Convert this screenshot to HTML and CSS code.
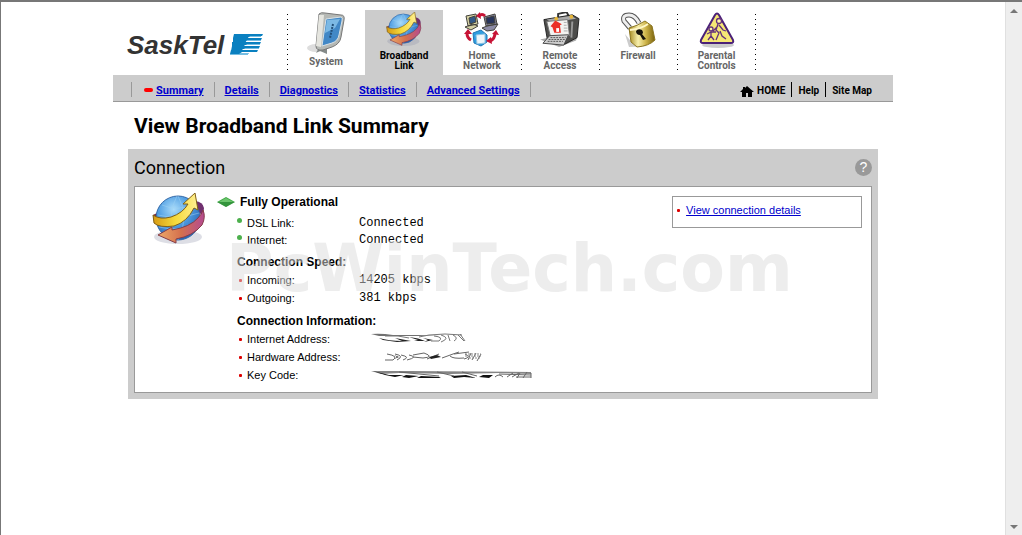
FILE: index.html
```
<!DOCTYPE html>
<html lang="en">

<head>
    <meta charset="UTF-8">
    <meta name="viewport" content="width=device-width, initial-scale=1.0">
    <title>View Broadband Link Summary</title>
    <link rel="stylesheet" href="styles.css">
</head>

<body>
    <div class="page">
        <header>
            <a class="logo" href="#" aria-label="SaskTel home">
                <span class="logo-name">SaskTel</span>
                <svg width="33" height="22" viewBox="0 0 33 22">
                    <path fill="#75bde2" d="M18 2H31V3H18zM3 6H31V7H3zM16 10H30V11H16zM2 14H29V15H2zM8 19H19V20H8zM0 20H18V21H0z" />
                    <path fill="#0a80c0" d="M4 0H33L32 2H20L18 4H3zM3 4H32L31 6H17L15 9H3zM2 8H31L30 10H17L14 13H2zM2 12H30L29 14H15L12 17H1zM1 16H28L27 18H12L9 20H0z" />
                    <path fill="#fff" d="M19 3H33V4H18zM17 7H33V8H16zM15 11H33V12H14zM13 15H33V16H12zM19 19H33V22H18z" />
                </svg>
            </a>
            <nav class="tabs">
                <a href="#">
                    <svg width="44" height="42" viewBox="0 0 44 42">
                        <ellipse cx="12" cy="36" rx="9" ry="4" fill="#ddd" />
                        <path fill="#858b8a" d="M17 32L23 36V42L16 39 12 41Z" />
                        <path fill="#b5b8b4" stroke="#777" d="M15 2Q17 0 21 1L37 3Q41 3 40 8L37 25Q36 32 28 35L19 38Q12 39 12 34Z" />
                        <path fill="#e5e5df" d="M15 3L20 3 17 35 12 34Z" />
                        <path fill="#4288c6" stroke="#d9e2e7" d="M22 7L37 5Q39 5 38 9L35 23Q34 29 28 31L18 34Z" />
                        <path fill="#7cb9e4" d="M23 8L36 7 31 16 21 21Z" />
                        <path fill="none" stroke="#234f79" stroke-width="2" stroke-dasharray="2 1" d="M29 12L26 26" />
                    </svg>
                    <span>System</span>
                </a>
                <a class="active" href="#">
                    <svg width="36" height="36" viewBox="0 0 54 54">
                        <use href="#globe" />
                    </svg>
                    <span>Broadband<br>Link</span>
                </a>
                <a href="#">
                    <svg width="36" height="36" viewBox="0 0 36 36">
                        <g stroke="#44433c">
                            <path fill="#d5d1a4" d="M2 4L12 2 14 12 4 14ZM1 15L9 12 14 14 7 18Z" />
                            <path fill="#315887" d="M5 6L11 4 12 10 6 12Z" />
                            <path fill="#8c8ba6" d="M20 5L31 2 33 12 22 14ZM18 16L23 14 34 12 30 18 23 19Z" />
                            <path fill="#27345c" d="M22 6L30 4 31 11 23 12Z" />
                            <path fill="#2f9ee0" stroke="#2177b5" d="M9 21L17 18 23 23 23 30 17 34 10 31Z" />
                            <path fill="#eef6fa" stroke="#8fc4e4" d="M12 23L21 22 21 31 13 32Z" />
                        </g>
                        <g fill="none" stroke="#c71335" stroke-width="3">
                            <path d="M15 4Q18 1 21 4" />
                            <path d="M7 28Q3 26 3 21" />
                            <path d="M31 21Q31 27 26 29" />
                        </g>
                        <path fill="#c71335" d="M12 4L16 0 17 7ZM0 22L4 17 8 22ZM28 22L32 18 35 23ZM22 29L27 25 28 32Z" />
                    </svg>
                    <span>Home<br>Network</span>
                </a>
                <a href="#">
                    <svg width="40" height="36" viewBox="0 0 42 38">
                        <path fill="#aaa" d="M0 29L22 24 40 21 38 30 20 37Z" />
                        <path fill="none" stroke="#333" stroke-width="2" d="M19 6V2L28 0 30 4" />
                        <path fill="#4d4d4b" stroke="#222" d="M4 8L34 3 41 7 39 27 26 34 8 31Z" />
                        <path fill="#aaa" d="M7 8L33 4 38 7 12 11Z" />
                        <path fill="#f3f3f1" stroke="#777" d="M7 10L29 8 31 25 11 26Z" />
                        <path fill="#eb3026" d="M11 15L16 9 23 13 21 14 22 22 15 22 13 16Z" />
                        <path fill="#fff" d="M17 17H20V21H17Z" />
                        <path stroke="#aaa" d="M25 11L28 11M25 14L28 14M25 17L29 17M25 20L29 20" />
                        <path fill="#ccc" stroke="#444" d="M10 25L30 24 25 35 3 33Z" />
                        <path stroke="#555" d="M11 27H27M9 29H26M8 31H24" stroke-dasharray="2 1" />
                        <path stroke="#999" stroke-width="2" d="M34 10L33 27" />
                        <circle cx="17" cy="7" r="2" fill="#e6b63a" />
                        <circle cx="33" cy="5" r="2" fill="#e6b63a" />
                    </svg>
                    <span>Remote<br>Access</span>
                </a>
                <a href="#">
                    <svg width="38" height="36" viewBox="0 0 38 36">
                        <defs>
                            <linearGradient id="gold">
                                <stop offset="0" stop-color="#a68a1e" />
                                <stop offset=".35" stop-color="#f7efad" />
                                <stop offset=".65" stop-color="#cdb348" />
                                <stop offset="1" stop-color="#77600b" />
                            </linearGradient>
                        </defs>
                        <path fill="#ccc" d="M6 22L15 33 30 34 10 35Z" />
                        <path fill="none" stroke="#555" stroke-width="5" d="M11 16L5 9Q3 3 10 3Q16 3 20 11" />
                        <path fill="none" stroke="#eee" stroke-width="3" d="M11 16L5 9Q3 3 10 3Q16 3 20 11" />
                        <path fill="url(#gold)" stroke="#8c7622" d="M10 16Q18 14 26 9L33 14 36 28Q30 34 18 35L12 30Z" />
                        <path fill="none" stroke="#fff7c7" stroke-width="2" d="M11 18Q22 17 29 12" />
                        <path fill="#15120a" d="M17 19Q19 16 23 18Q25 21 23 22L27 27 24 28 21 23Q17 23 17 19Z" />
                    </svg>
                    <span>Firewall</span>
                </a>
                <a href="#">
                    <svg width="36" height="36" viewBox="0 0 36 36">
                        <ellipse cx="19" cy="33" rx="16" ry="3" fill="#ccc" />
                        <path fill="#f6e775" stroke="#4b2178" stroke-width="2" stroke-linejoin="round" d="M16 3Q18 0 20 3L34 28Q35 31 32 31H4Q1 31 2 28Z" />
                        <g fill="#fff5a8" stroke="#64307c" stroke-width="1.3">
                            <circle cx="20" cy="9" r="2.5" />
                            <circle cx="12" cy="17" r="2" />
                            <path fill="none" d="M19 12L17 18 20 21 17 28M20 13L24 18 27 19M21 19L23 24 27 27M19 14L14 19M12 20V24L9 28M12 20L8 22M12 20L17 20M12 24L15 28" />
                        </g>
                    </svg>
                    <span>Parental<br>Controls</span>
                </a>
            </nav>
        </header>

        <nav class="subnav">
            <ul>
                <li class="current"><a href="#">Summary</a></li>
                <li><a href="#">Details</a></li>
                <li><a href="#">Diagnostics</a></li>
                <li><a href="#">Statistics</a></li>
                <li><a href="#">Advanced Settings</a></li>
            </ul>
            <ul class="tools">
                <li>
                    <a href="#"><svg width="14" height="11" viewBox="0 0 14 11"><path d="M7 0L14 6H12V11H8V7H6V11H2V6H0L3 3V1H5V2Z" /></svg>HOME</a>
                </li>
                <li><a href="#">Help</a></li>
                <li><a href="#">Site Map</a></li>
            </ul>
        </nav>

        <main>
            <h1>View Broadband Link Summary</h1>
            <section class="panel">
                <div class="panel-head">
                    <h2>Connection</h2>
                    <button class="help" type="button" aria-label="Help">?</button>
                </div>
                <div class="panel-body">
                    <svg class="globe" width="54" height="54" viewBox="0 0 54 54">
                        <defs>
                            <radialGradient id="sea" cx=".4" cy=".3" r=".7">
                                <stop offset="0" stop-color="#a9dcfb" />
                                <stop offset=".5" stop-color="#529fe2" />
                                <stop offset="1" stop-color="#2764b4" />
                            </radialGradient>
                            <linearGradient id="yellow">
                                <stop offset="0" stop-color="#d69a13" />
                                <stop offset=".5" stop-color="#f5da3c" />
                                <stop offset="1" stop-color="#ffef93" />
                            </linearGradient>
                            <linearGradient id="orange">
                                <stop offset="0" stop-color="#eda868" />
                                <stop offset=".5" stop-color="#d4704d" />
                                <stop offset="1" stop-color="#b44a91" />
                            </linearGradient>
                        </defs>
                        <g id="globe">
                            <ellipse cx="26" cy="44" rx="24" ry="7" fill="#8e91a8" opacity=".3" />
                            <path fill="#70306f" d="M43 8Q51 9 52 15L51 23 44 17Z" />
                            <path fill="#7b2537" d="M7 19L1 22 2 28 10 27Z" />
                            <circle cx="26" cy="25" r="22" fill="url(#sea)" stroke="#3468a7" />
                            <g fill="none" stroke="#a0d3f3" stroke-width="1" opacity=".5">
                                <path d="M10 12Q26 19 42 11M6 22Q26 27 47 20M7 34Q26 39 46 31" />
                                <path d="M25 3Q13 24 25 47M26 3Q38 24 26 47" />
                            </g>
                            <path fill="url(#yellow)" stroke="#806016" d="M1 22Q8 27 19 24Q31 20 36 11L31 11 43 0 46 17 42 15Q35 29 22 33Q7 35 2 30Z" />
                            <path fill="url(#orange)" stroke="#863c48" d="M51 17Q54 24 50 32Q41 43 24 46V50L6 42 20 34V37Q38 34 46 25Q50 21 51 17Z" />
                        </g>
                    </svg>
                    <div class="status">
                        <h3 class="operational">
                            <svg width="18" height="10" viewBox="0 0 18 10"><path fill="#42aa48" d="M0 5L9 0 18 5 9 10Z" /><path fill="#6cc46d" d="M2 5L9 1 16 5Z" /><path fill="#247d2f" d="M0 5H18L9 10Z" opacity=".5" /></svg>
                            Fully Operational
                        </h3>
                        <table class="link-state">
                            <tr><th scope="row">DSL Link:</th><td>Connected</td></tr>
                            <tr><th scope="row">Internet:</th><td>Connected</td></tr>
                        </table>
                        <h3>Connection Speed:</h3>
                        <table>
                            <tr><th scope="row">Incoming:</th><td>14205 kbps</td></tr>
                            <tr><th scope="row">Outgoing:</th><td>381 kbps</td></tr>
                        </table>
                        <h3>Connection Information:</h3>
                        <table>
                            <tr>
                                <th scope="row">Internet Address:</th>
                                <td>
                                    <svg width="180" height="12" viewBox="0 0 180 12">
                                        <path fill="#333" d="M12 1Q22 0 34 2L60 2 80 2 60 3 35 3 20 3Z" opacity=".7" />
                                        <path fill="#222" d="M20 5Q30 8 43 8L36 5 52 8 38 9 24 7ZM50 4Q60 5 66 8L55 8 59 7ZM64 5L74 7 65 9 69 7Z" />
                                        <path fill="none" stroke="#777" d="M75 3Q85 4 80 8L72 8M82 2Q92 5 82 9M89 2L91 8M94 2Q100 5 95 8M99 2L105 8M101 1L106 8M26 3Q40 2 50 5M60 4L70 2 86 1 103 2" />
                                    </svg>
                                </td>
                            </tr>
                            <tr>
                                <th scope="row">Hardware Address:</th>
                                <td>
                                    <svg width="180" height="12" viewBox="0 0 180 12">
                                        <path fill="none" stroke="#666" d="M28 3Q40 5 34 9L26 9M36 3Q46 5 38 9M42 4Q52 6 44 9M50 4Q60 6 48 9M54 4L65 2Q76 6 64 7L54 6M68 8L80 3M83 7L94 3 100 1M91 5Q94 8 105 7M95 3L110 1M106 3Q113 6 105 8M112 2L109 9M117 2L113 9M122 3L118 10" />
                                        <path fill="#222" d="M70 6L78 4 82 6 72 8ZM35 4L40 6 35 8 38 6Z" />
                                        <path stroke="#888" stroke-dasharray="2 1" d="M106 3H122M106 5H122M110 7H121" />
                                    </svg>
                                </td>
                            </tr>
                            <tr>
                                <th scope="row">Key Code:</th>
                                <td>
                                    <svg width="180" height="12" viewBox="0 0 180 12">
                                        <path fill="#333" d="M12 2L50 2 172 3 172 5 140 4 92 5 40 4 22 5Z" opacity=".6" />
                                        <path fill="#111" d="M14 2L30 6 45 6 36 8 26 6ZM47 6L60 7 50 9 43 8ZM62 7L82 8 80 9 58 9ZM92 7L107 6 117 9 105 8 95 9ZM124 6L134 6 130 9 120 8Z" />
                                        <path fill="none" stroke="#666" d="M40 3L80 7M78 3L95 7M103 3L118 7M136 8Q140 4 144 8M148 8L154 4M153 8L160 4M161 4L158 9M168 3L164 9M172 4V9M140 5L172 6M157 8H172" />
                                    </svg>
                                </td>
                            </tr>
                        </table>
                    </div>
                    <div class="related">
                        <a href="#">View connection details</a>
                    </div>
                    <div class="watermark">PcWinTech.com</div>
                </div>
            </section>
        </main>
    </div>

    <div class="scrollbar">
        <button type="button" aria-label="Scroll up"><svg width="8" height="4" viewBox="0 0 8 4"><path fill="#777" d="M4 0L8 4H0Z" /></svg></button>
        <button type="button" aria-label="Scroll down"><svg width="8" height="4" viewBox="0 0 8 4"><path fill="#777" d="M0 0H8L4 4Z" /></svg></button>
    </div>
</body>

</html>
```
FILE: styles.css
```
* {
    box-sizing: border-box;
}

body {
    display: flex;
    min-height: 100vh;
    margin: 0;
    border-top: 2px solid #777;
    border-left: 1px solid #777;
    background-color: #fff;
    color: #000;
    font-family: "Liberation Sans", Arial, sans-serif;
    font-size: 11px;
}

svg {
    display: block;
}

h1,
h2,
h3,
ul {
    margin: 0;
    padding: 0;
}

.page {
    flex: 1;
    max-width: 780px;
    margin: 0 auto;
}

header {
    display: flex;
    padding-top: 8px;
}

.logo {
    display: flex;
    align-items: center;
    gap: 6px;
    width: 174px;
    padding-top: 5px;
    padding-left: 14px;
    text-decoration: none;
}

.logo-name {
    color: #333;
    font-size: 26px;
    font-style: italic;
    font-weight: bold;
}

.tabs {
    display: flex;
}

.tabs a {
    display: flex;
    flex-direction: column;
    align-items: center;
    width: 78px;
    height: 65px;
    padding-top: 2px;
    color: #666;
    font-family: Roboto, Arial, sans-serif;
    font-size: 10px;
    font-weight: bold;
    line-height: 10px;
    text-align: center;
    text-decoration: none;
    background: repeating-linear-gradient(#000 0 1px, transparent 1px 5px) 0 4px / 1px 56px no-repeat;
}

.tabs a svg {
    margin-bottom: 3px;
}

.tabs a.active {
    background: #ccc;
    color: #000;
}

.tabs .active + a {
    background: none;
}

.tabs a:last-child {
    width: 79px;
    background:
        repeating-linear-gradient(#000 0 1px, transparent 1px 5px) 0 4px / 1px 56px no-repeat,
        repeating-linear-gradient(#000 0 1px, transparent 1px 5px) 100% 4px / 1px 56px no-repeat;
}

.subnav {
    display: flex;
    justify-content: space-between;
    padding: 7px 15px 4px 18px;
    border-bottom: 1px solid #999;
    background-color: #ccc;
    font-family: Roboto, Arial, sans-serif;
    font-size: 11px;
    font-weight: bold;
    line-height: 16px;
}

.subnav ul {
    display: flex;
    list-style: none;
}

.subnav li {
    padding: 1px 10px 0;
    height: 15px;
    border-left: 1px solid #999;
}

.subnav li:last-child {
    border-right: 1px solid #999;
}

.subnav a {
    color: #00c;
}

.subnav .current {
    padding-left: 12px;
}

.subnav .current::before {
    content: "";
    display: inline-block;
    width: 9px;
    height: 4px;
    margin-right: 3px;
    border-radius: 2px;
    background-color: #f00;
    vertical-align: 2px;
}

.subnav .tools {
    font-size: 10px;
}

.subnav .tools li {
    padding: 1px 6px 0;
    border-left: 1px solid #000;
    border-right: 0;
}

.subnav .tools li:first-child {
    border-left: 0;
}

.tools a {
    display: flex;
    align-items: center;
    gap: 3px;
    color: #000;
    text-decoration: none;
}

main {
    padding: 0 15px;
}

h1 {
    padding: 10px 6px 9px;
    font-family: Roboto, Arial, sans-serif;
    font-size: 21px;
    line-height: 28px;
}

.panel {
    padding: 0 6px 6px;
    background-color: #ccc;
}

.panel-head {
    display: flex;
    align-items: center;
    justify-content: space-between;
    height: 37px;
}

h2 {
    font-family: Roboto, Arial, sans-serif;
    font-size: 18px;
    font-weight: normal;
}

.help {
    width: 17px;
    height: 17px;
    padding: 0;
    border: 0;
    border-radius: 50%;
    background-color: #999;
    color: #fff;
    font-family: inherit;
    font-size: 14px;
    line-height: 17px;
}

.panel-body {
    position: relative;
    display: flex;
    align-items: flex-start;
    padding: 6px 9px 8px 17px;
    border: 1px solid #999;
    background-color: #fff;
}

.status {
    flex: 1;
    padding-left: 31px;
}

h3 {
    margin-top: 5px;
    font-size: 12px;
    line-height: 18px;
}

.operational {
    display: flex;
    align-items: center;
    gap: 5px;
    margin: 0 0 3px -20px;
}

table {
    border-collapse: collapse;
}

th,
td {
    height: 18px;
    padding: 0;
    line-height: 16px;
}

.link-state th,
.link-state td {
    height: 17px;
}

th {
    width: 122px;
    font-weight: normal;
    text-align: left;
}

th::before,
.related::before {
    content: "";
    display: inline-block;
    width: 3px;
    height: 3px;
    margin: 0 5px 0 2px;
    border-radius: 1px;
    background-color: #d00;
    vertical-align: 2px;
}

.link-state th::before {
    width: 5px;
    height: 5px;
    margin: 0 5px 0 0;
    border-radius: 50%;
    background-color: #4db04d;
    vertical-align: 4px;
}

td {
    font-family: "Liberation Mono", "Courier New", monospace;
    font-size: 12px;
}

.related {
    width: 190px;
    height: 32px;
    margin-top: 3px;
    padding: 5px 3px;
    border: 1px solid #999;
    line-height: 16px;
}

.related::before {
    margin: 0 3px 0 1px;
}

.related a {
    color: #00c;
}

.watermark {
    position: absolute;
    top: 44px;
    left: 91px;
    color: rgba(219, 219, 219, 0.5);
    font-family: "DejaVu Sans", Verdana, sans-serif;
    font-size: 65px;
    font-weight: bold;
    line-height: 75px;
    pointer-events: none;
}

.scrollbar {
    display: flex;
    flex-direction: column;
    justify-content: space-between;
    width: 17px;
    border-left: 1px solid #e0e0e0;
    background-color: #eee;
}

.scrollbar button {
    display: flex;
    align-items: center;
    justify-content: center;
    height: 17px;
    padding: 0;
    border: 0;
    background: none;
}
```
